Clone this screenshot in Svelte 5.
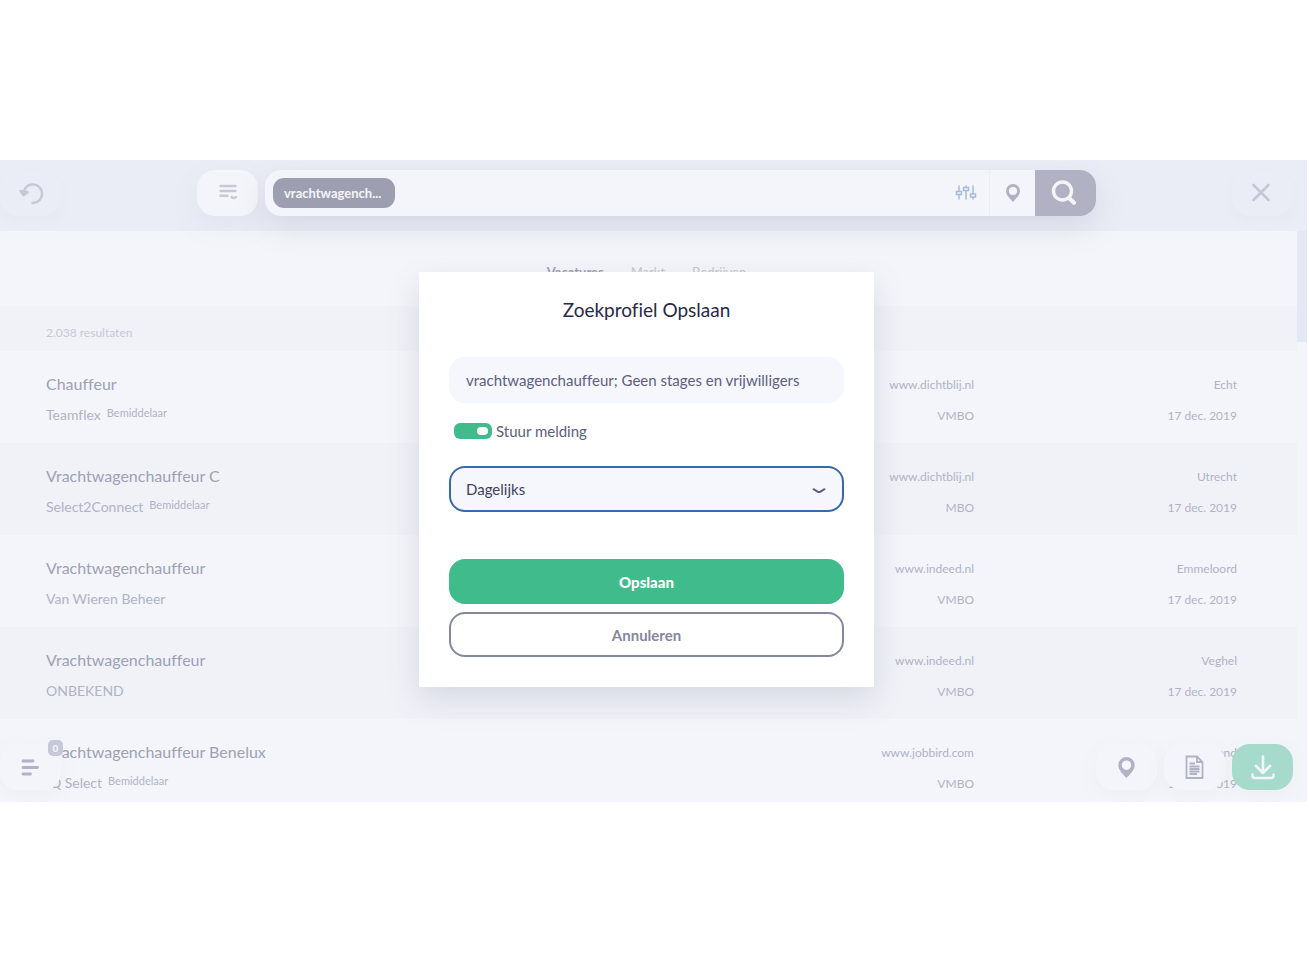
<script lang="ts">
  type Result = {
    title: string;
    company: string;
    agency?: boolean;
    site: string;
    level: string;
    city: string;
    date: string;
  };

  const results: Result[] = [
    { title: "Chauffeur", company: "Teamflex", agency: true, site: "www.dichtblij.nl", level: "VMBO", city: "Echt", date: "17 dec. 2019" },
    { title: "Vrachtwagenchauffeur C", company: "Select2Connect", agency: true, site: "www.dichtblij.nl", level: "MBO", city: "Utrecht", date: "17 dec. 2019" },
    { title: "Vrachtwagenchauffeur", company: "Van Wieren Beheer", site: "www.indeed.nl", level: "VMBO", city: "Emmeloord", date: "17 dec. 2019" },
    { title: "Vrachtwagenchauffeur", company: "ONBEKEND", site: "www.indeed.nl", level: "VMBO", city: "Veghel", date: "17 dec. 2019" },
    { title: "Vrachtwagenchauffeur Benelux", company: "IQ Select", agency: true, site: "www.jobbird.com", level: "VMBO", city: "Purmerend", date: "17 dec. 2019" },
  ];

  let profileName = $state("vrachtwagenchauffeur; Geen stages en vrijwilligers");
  let notify = $state(true);
  let frequency = $state("dagelijks");
</script>

{#snippet pin(size: number)}
  <svg width={size} height={size} viewBox="0 0 20 20" aria-hidden="true">
    <path
      fill="currentColor"
      fill-rule="evenodd"
      d="M10 0a7.800 7.800 0 0 0-7.800 7.800c0 4.700 4.400 8.200 7.800 12.200c3.400-4 7.800-7.500 7.800-12.200A7.800 7.800 0 0 0 10 0zM10 3.300a4.500 4.500 0 1 1 0 9a4.500 4.500 0 0 1 0-9z"
    />
  </svg>
{/snippet}

<div class="page">
  <div class="app">
    <header>
      <button class="tile ghost" aria-label="Terug">
        <svg width="26" height="24" viewBox="0 0 26 24" fill="none" stroke="currentColor" stroke-width="2.400" stroke-linecap="round" stroke-linejoin="round">
          <path d="M5.500 13A9.300 9.300 0 1 1 14.500 22" />
          <path d="M2.500 10l3 4.200 4.200-3z" fill="currentColor" />
        </svg>
      </button>

      <div class="search-group">
        <button class="tile" aria-label="Filters">
          <svg width="20" height="20" viewBox="0 0 20 20" fill="none" stroke="currentColor" stroke-width="2.400" stroke-linecap="round">
            <path d="M2.500 3h15M2.500 8h15M2.500 12.800h7M13.500 14q2.400 2 4.500 0" />
          </svg>
        </button>
        <form class="search" onsubmit={(e) => e.preventDefault()}>
          <span class="chip">vrachtwagench...</span>
          <input class="query" type="text" aria-label="Zoeken" />
          <button type="button" class="sliders" aria-label="Opties">
            <svg width="22" height="18" viewBox="0 0 22 18" fill="none" stroke="currentColor" stroke-width="1.500">
              <path d="M4 1.500v6M4 10.500v5M11 1.500v2M11 6.500v9M18 1.500v8.500M18 13v2.500" />
              <path d="M1.500 7.500h5v3h-5zM8.500 3.500h5v3h-5zM15.500 10h5v3h-5z" />
            </svg>
          </button>
          <button type="button" class="place" aria-label="Locatie">{@render pin(18)}</button>
          <button class="go" aria-label="Zoek">
            <svg width="26" height="26" viewBox="0 0 26 26" fill="none" stroke="currentColor" stroke-linecap="round">
              <circle cx="11.500" cy="11" r="9" stroke-width="3.400" />
              <path d="M18.500 18.500l4.500 4.300" stroke-width="4.200" />
            </svg>
          </button>
        </form>
      </div>

      <button class="tile ghost close" aria-label="Sluiten">
        <svg width="20" height="20" viewBox="0 0 20 20" fill="none" stroke="currentColor" stroke-width="2.600" stroke-linecap="round">
          <path d="M2.500 2l15 15M17.500 2l-15 15" />
        </svg>
      </button>
    </header>

    <main>
      <nav>
        <a class="active" href="#vacatures">Vacatures</a>
        <a href="#markt">Markt</a>
        <a href="#bedrijven">Bedrijven</a>
      </nav>
      <p class="count">2.038 resultaten</p>
      <ul>
        {#each results as r}
          <li>
            <span class="title">{r.title}</span>
            <span>{r.site}</span>
            <span>{r.city}</span>
            <span class="company">{r.company}{#if r.agency}<small>Bemiddelaar</small>{/if}</span>
            <span>{r.level}</span>
            <span>{r.date}</span>
          </li>
        {/each}
      </ul>
      <div class="scrollbar"></div>
    </main>

    <button class="tile menu" aria-label="Menu">
      <svg width="20" height="20" viewBox="0 0 20 20" fill="none" stroke="currentColor" stroke-width="2.800" stroke-linecap="round">
        <path d="M2 4h10M2 10.500h14.500M2 17h7.500" />
      </svg>
      <span class="badge">0</span>
    </button>

    <div class="actions">
      <button class="tile" aria-label="Kaart">{@render pin(21)}</button>
      <button class="tile" aria-label="Document">
        <svg width="20" height="24" viewBox="0 0 20 24" fill="none" stroke="currentColor" stroke-width="1.800">
          <path d="M1.500 1.500h10.500L17.500 7V23H1.500z" />
          <path d="M12 1.500V7h5.500M4.500 8.500h5.500M4.500 11.500h10M4.500 14h10M4.500 16.500h10M4.500 19h7.500" />
        </svg>
      </button>
      <button class="tile download" aria-label="Downloaden">
        <svg width="26" height="26" viewBox="0 0 26 26" fill="none" stroke="currentColor" stroke-width="2.600" stroke-linecap="round" stroke-linejoin="round">
          <path d="M13 2.500v16M6 12l7 7 7-7M2.500 20.500v1q0 2.500 2.500 2.500h16q2.500 0 2.500-2.500v-1" />
        </svg>
      </button>
    </div>

    <div class="overlay">
      <div class="modal" role="dialog" aria-labelledby="dialog-title">
        <h1 id="dialog-title">Zoekprofiel Opslaan</h1>
        <input class="field" type="text" aria-label="Naam zoekprofiel" bind:value={profileName} />
        <label class="switch">
          <input type="checkbox" bind:checked={notify} />
          Stuur melding
        </label>
        <div class="select">
          <select class="field" aria-label="Frequentie" bind:value={frequency}>
            <option value="dagelijks">Dagelijks</option>
            <option value="wekelijks">Wekelijks</option>
          </select>
          <svg width="14" height="8" viewBox="0 0 14 8" fill="none" stroke="currentColor" stroke-width="2" stroke-linecap="round">
            <path d="M1.500 2.200L5.500 4.600q1.500.9 3 0L12.500 2.200" />
          </svg>
        </div>
        <button class="save">Opslaan</button>
        <button class="cancel">Annuleren</button>
      </div>
    </div>
  </div>
</div>

<style>
  :global(body) {
    background: #fff;
  }
  .page {
    --panel: #f4f5fa;
    --stripe: #f1f2f8;
    --bar: #eaedf6;
    --icon: #b0b2c5;
    --faint: #c5c8d6;
    --green: #40bb8b;
    height: 100vh;
    padding: 160px 2px 161px 0;
    font-family: Lato, sans-serif;
    font-variant-ligatures: none;
    color: var(--icon);
  }
  .page,
  .page * {
    box-sizing: border-box;
  }
  button,
  input,
  select {
    font: inherit;
    font-variant-ligatures: none;
    border: 0;
    padding: 0;
    background: none;
    color: inherit;
  }
  svg {
    display: block;
  }
  .app {
    position: relative;
    display: flex;
    flex-direction: column;
    height: 100%;
    overflow: hidden;
    background: var(--panel);
  }
  header {
    position: relative;
    z-index: 1;
    flex: none;
    display: flex;
    align-items: flex-start;
    justify-content: space-between;
    height: 71px;
    padding: 10px 14px 0 0;
    background: var(--bar);
  }
  .tile {
    flex: none;
    display: grid;
    place-items: center;
    width: 61px;
    height: 46px;
    border-radius: 18px;
    background: var(--panel);
    box-shadow: 0 6px 22px rgba(120, 125, 160, 0.05);
  }
  .ghost {
    background: var(--bar);
    color: var(--faint);
    box-shadow: 0 6px 14px rgba(120, 125, 160, 0.03);
  }
  .close {
    padding-right: 4px;
  }
  .search-group {
    flex: 0 1 899px;
    display: flex;
    gap: 7px;
  }
  .search-group > .tile {
    color: var(--faint);
    box-shadow: 0 10px 30px rgba(120, 125, 150, 0.08);
  }
  .search {
    flex: 1;
    display: flex;
    align-items: center;
    height: 46px;
    padding-left: 8px;
    overflow: hidden;
    border-radius: 16px;
    background: var(--panel);
    box-shadow: 0 12px 30px rgba(110, 110, 135, 0.16);
  }
  .chip {
    padding: 0 14px 0 11px;
    border-radius: 11px;
    background: #9d9fb0;
    color: var(--panel);
    font-size: 13px;
    font-weight: 700;
    line-height: 30px;
  }
  .query {
    flex: 1;
    min-width: 0;
  }
  .sliders {
    display: grid;
    place-items: center;
    width: 48px;
    height: 46px;
    border-right: 1px solid #eceef4;
    color: #a3badb;
  }
  .place {
    display: grid;
    place-items: center;
    width: 45px;
    height: 46px;
  }
  .go {
    display: grid;
    place-items: center;
    width: 61px;
    height: 46px;
    padding-right: 4px;
    background: #b0b2c3;
    color: var(--panel);
  }
  main {
    position: relative;
    flex: 1;
    min-height: 0;
    padding-right: 10px;
    overflow: hidden;
  }
  nav {
    display: flex;
    justify-content: center;
    gap: 27px;
    height: 75px;
    padding: 31px 4px 0 0;
    font-size: 13px;
    line-height: 20px;
  }
  nav a {
    color: var(--faint);
    text-decoration: none;
  }
  nav .active {
    color: #9ea0b4;
    font-weight: 700;
  }
  .count {
    margin: 0;
    padding: 8px 0 0 46px;
    background: var(--stripe);
    color: var(--faint);
    font-size: 12px;
    line-height: 37px;
  }
  ul {
    margin: 0;
    padding: 0;
    list-style: none;
  }
  li {
    display: grid;
    grid-template-columns: 1fr 200px 263px;
    grid-template-rows: 31px 31px;
    height: 92px;
    padding: 17px 60px 0 46px;
    font-size: 12px;
    line-height: 34px;
    text-align: right;
  }
  li:nth-child(even) {
    background: var(--stripe);
  }
  .title {
    color: #9ea0b4;
    font-size: 16px;
    line-height: 32px;
    text-align: left;
  }
  .company {
    font-size: 14px;
    line-height: 32px;
    text-align: left;
  }
  small {
    margin-left: 6px;
    font-size: 11px;
    line-height: 1;
    vertical-align: 3px;
  }
  .scrollbar {
    position: absolute;
    top: 0;
    right: 0;
    width: 10px;
    height: 111px;
    background: #e3e8f3;
  }
  .menu {
    position: absolute;
    bottom: 12px;
    left: 0;
  }
  .badge {
    position: absolute;
    top: -4px;
    right: -2px;
    width: 15px;
    border-radius: 5px;
    background: var(--faint);
    color: var(--panel);
    font-size: 10px;
    font-weight: 900;
    line-height: 16px;
  }
  .actions {
    position: absolute;
    right: 14px;
    bottom: 12px;
    display: flex;
    gap: 7px;
  }
  .download {
    background: #a6dacb;
    color: var(--panel);
  }
  .overlay {
    position: absolute;
    inset: 0;
    z-index: 2;
    display: flex;
    align-items: center;
    justify-content: center;
    padding: 0 14px 3px 0;
  }
  .modal {
    display: flex;
    flex-direction: column;
    width: 455px;
    padding: 24px 30px 30px;
    background: #fff;
    color: #5d5e7d;
    font-size: 15px;
    box-shadow: 0 12px 30px rgba(90, 100, 130, 0.18);
  }
  h1 {
    margin: 0 0 33px;
    color: #27284a;
    font-size: 19px;
    font-weight: 400;
    line-height: 28px;
    text-align: center;
  }
  .field {
    width: 100%;
    height: 46px;
    padding: 0 17px;
    border-radius: 16px;
    background: #f6f7fd;
  }
  .switch {
    display: flex;
    align-items: center;
    gap: 4px;
    margin: 16px 0 23px 5px;
    line-height: 24px;
  }
  .switch input {
    appearance: none;
    display: flex;
    align-items: center;
    width: 38px;
    height: 16px;
    margin: 0;
    padding: 0 4px;
    border-radius: 6px;
    background: #c5c8d6;
  }
  .switch input::before {
    content: "";
    width: 11px;
    height: 8px;
    border-radius: 4px;
    background: #fff;
  }
  .switch input:checked {
    justify-content: flex-end;
    background: var(--green);
  }
  .select {
    position: relative;
    margin-bottom: 47px;
  }
  .select select {
    display: block;
    appearance: none;
    padding: 0 15px;
    border: 2px solid #3a69a9;
    color: #3e3f60;
    outline: 0;
  }
  .select svg {
    position: absolute;
    top: 21px;
    right: 18px;
    pointer-events: none;
  }
  .save,
  .cancel {
    height: 45px;
    border-radius: 16px;
    font-weight: 700;
  }
  .save {
    margin-bottom: 8px;
    background: var(--green);
    color: #fff;
    font-weight: 900;
  }
  .cancel {
    border: 2px solid #85879f;
    color: #85879f;
  }
</style>
